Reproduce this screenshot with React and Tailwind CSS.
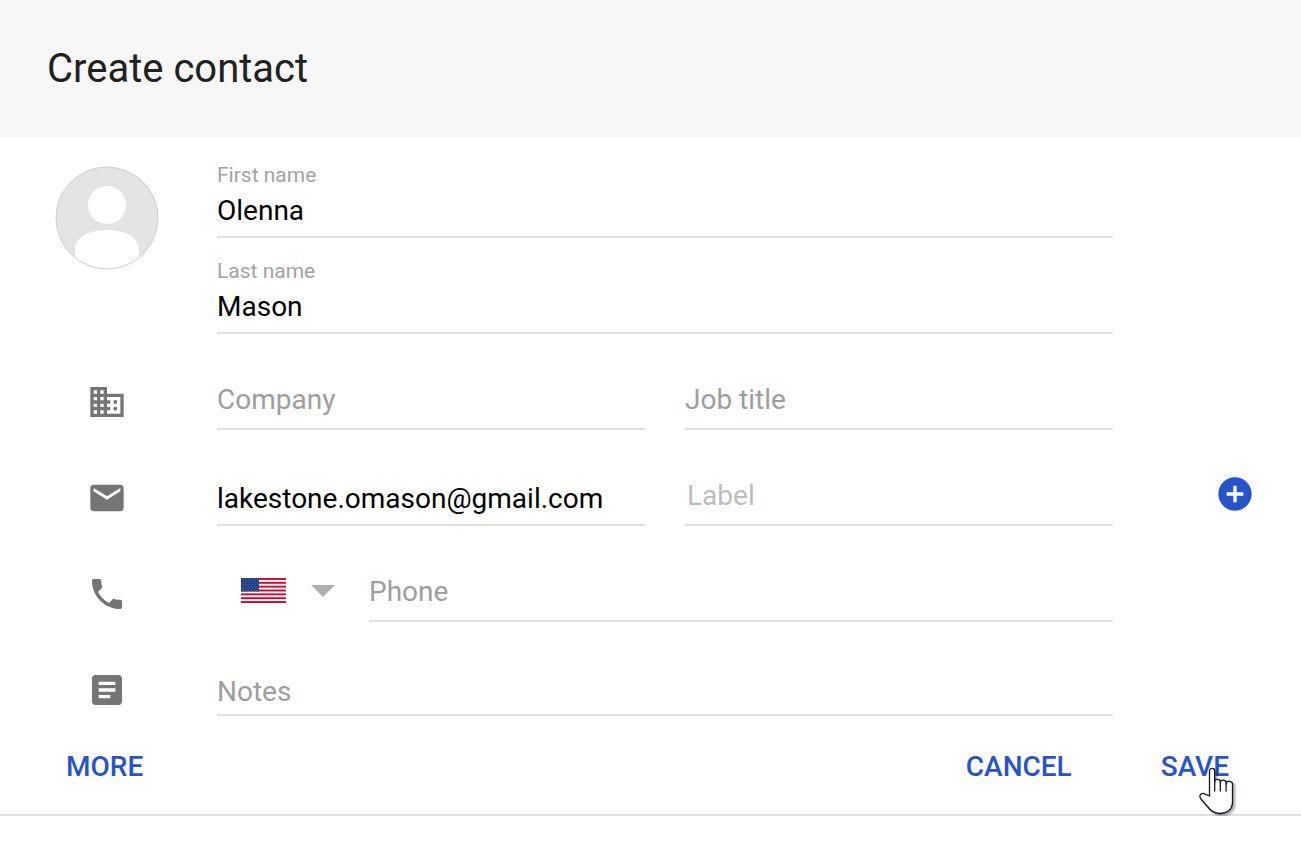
import React from 'react';
import { MdAddCircle, MdArticle, MdBusiness, MdEmail, MdPhone } from 'react-icons/md';

const inputClass =
  'block w-full h-10 text-[28px] leading-10 text-black placeholder:text-[#9e9e9e] bg-transparent outline-none';

const stripes = [0, 2, 4, 6, 8, 10, 12];
const starRows = [0, 1, 2, 3, 4, 5, 6];
const starCols = [0, 1, 2, 3, 4, 5];

function Flag() {
  return (
    <svg width="45" height="25" viewBox="0 0 45 25" preserveAspectRatio="none" aria-hidden="true">
      <rect width="45" height="25" fill="#fff" />
      {stripes.map((n) => (
        <rect key={n} y={(n * 25) / 13} width="45" height={25 / 13} fill="#cb0a2f" />
      ))}
      <rect width="18" height="13.4" fill="#1f3f86" />
      {starRows.map((r) =>
        starCols.map((c) => (
          <circle key={`${r}-${c}`} cx={1.3 + c * 3 + (r % 2) * 1.5} cy={1 + r * 1.9} r="0.4" fill="#9db4d8" />
        ))
      )}
    </svg>
  );
}

function Avatar() {
  return (
    <svg width="104" height="104" viewBox="0 0 104 104" aria-hidden="true">
      <defs>
        <clipPath id="avatar-clip">
          <circle cx="52" cy="52" r="51" />
        </clipPath>
      </defs>
      <circle cx="52" cy="52" r="51" fill="#e4e4e4" />
      <g clipPath="url(#avatar-clip)" fill="#fff">
        <circle cx="52" cy="39" r="19" />
        <path d="M20 104V84C20 70 36 64 52 64s32 6 32 20v20z" />
      </g>
      <circle cx="52" cy="52" r="51" fill="none" stroke="#cfcfcf" />
    </svg>
  );
}

function HandCursor() {
  return (
    <svg
      className="absolute left-[38px] top-[20px] pointer-events-none drop-shadow-[2px_2px_1px_rgba(0,0,0,0.35)]"
      width="38"
      height="50"
      viewBox="0 0 38 50"
      aria-hidden="true"
    >
      <path
        d="M10.500 29V4a2.600 2.600 0 0 1 5.200 0V15.500a2.700 2.700 0 0 1 5.600-.5v.8a2.700 2.700 0 0 1 5.800.3v.8a2.900 2.900 0 0 1 6.400 1.200V35c0 7.500-5.500 11.500-13 11.500-6 0-9-3-12-7L1.600 31.500C-.6 27.500 3.200 25.200 6 27.200L10.500 29z"
        fill="#fff"
        stroke="#111827"
        strokeWidth="1.3"
        strokeLinejoin="round"
      />
      <path d="M15.700 15v9.500M21.300 15.500v9M27.100 16.500v8" stroke="#111827" strokeWidth="1.3" fill="none" />
    </svg>
  );
}

function Row({ icon: Icon, action, children }) {
  return (
    <div className="grid grid-cols-[217px_1fr_188px]">
      <div className="flex justify-center pt-12 pr-1">
        {Icon && <Icon className="w-10 h-10 text-[#757575]" />}
      </div>
      <div className="flex gap-10 items-end">{children}</div>
      <div className="flex justify-center pt-11 pl-14">{action}</div>
    </div>
  );
}

function NameField({ id, label, value }) {
  return (
    <div className="flex-1 pt-[19px] pb-[5px] border-b-2 border-[#e0e0e0]">
      <label htmlFor={id} className="block mb-[2px] text-[21px] leading-7 text-[#a3a3a3]">{label}</label>
      <input id={id} className={inputClass} defaultValue={value} />
    </div>
  );
}

export default function App() {
  return (
    <div className="bg-white font-[Roboto,sans-serif]">
      <header className="bg-[#f7f7f7] px-[47px] py-[45px]">
        <h1 className="text-[40px] leading-[48px] text-[#212121]">Create contact</h1>
      </header>

      <form className="border-b-2 border-[#e0e0e0]" onSubmit={(e) => e.preventDefault()}>
        {/* Photo and name */}
        <div className="grid grid-cols-[217px_1fr_188px] pt-1">
          <div className="flex justify-center items-start pt-6 pr-1">
            <Avatar />
          </div>
          <div className="flex flex-col">
            <NameField id="first-name" label="First name" value="Olenna" />
            <NameField id="last-name" label="Last name" value="Mason" />
          </div>
        </div>

        <Row icon={MdBusiness}>
          <div className="flex-1 pt-[46px] pb-2 border-b-2 border-[#e0e0e0]">
            <input className={inputClass} aria-label="Company" placeholder="Company" />
          </div>
          <div className="flex-1 pt-[46px] pb-2 border-b-2 border-[#e0e0e0]">
            <input className={inputClass} aria-label="Job title" placeholder="Job title" />
          </div>
        </Row>

        <Row
          icon={MdEmail}
          action={
            <button type="button" aria-label="Add email" className="h-10">
              <MdAddCircle className="w-10 h-10 text-[#2754c8]" />
            </button>
          }
        >
          <div className="flex-1 pt-[49px] pb-[5px] border-b-2 border-[#e0e0e0]">
            <input type="email" className={inputClass} aria-label="Email" defaultValue="lakestone.omason@gmail.com" />
          </div>
          <div className="flex-1 pt-[46px] pb-2 border-b-2 border-[#e0e0e0]">
            <input className={`${inputClass} px-[2px] placeholder:text-[#bdbdbd]`} aria-label="Label" placeholder="Label" />
          </div>
        </Row>

        <Row icon={MdPhone}>
          <div className="flex flex-1">
            <div className="relative w-[152px] shrink-0 flex items-center gap-[25px] pl-6 pt-[33px]">
              <Flag />
              <svg width="24" height="12" viewBox="0 0 24 12" aria-hidden="true">
                <path d="M0 0h24L12 12z" fill="#b0b0b0" />
              </svg>
              <select aria-label="Country" className="absolute inset-x-4 bottom-2 h-12 opacity-0">
                <option>United States</option>
                <option>Canada</option>
              </select>
            </div>
            <div className="flex-1 pt-[46px] pb-2 border-b-2 border-[#e0e0e0]">
              <input type="tel" className={inputClass} aria-label="Phone" placeholder="Phone" />
            </div>
          </div>
        </Row>

        <Row icon={MdArticle}>
          <div className="flex-1 pt-[50px] pb-[2px] border-b-2 border-[#e0e0e0]">
            <input className={inputClass} aria-label="Notes" placeholder="Notes" />
          </div>
        </Row>

        <div className="flex items-center pl-[66px] pr-[72px] pt-[31px] pb-[27px] text-[28px] leading-10 font-medium text-[#2754c8]">
          <button type="button">MORE</button>
          <div className="flex gap-[89px] ml-auto">
            <button type="button">CANCEL</button>
            <button type="submit" className="relative">
              SAVE
              <HandCursor />
            </button>
          </div>
        </div>
      </form>
    </div>
  );
}
